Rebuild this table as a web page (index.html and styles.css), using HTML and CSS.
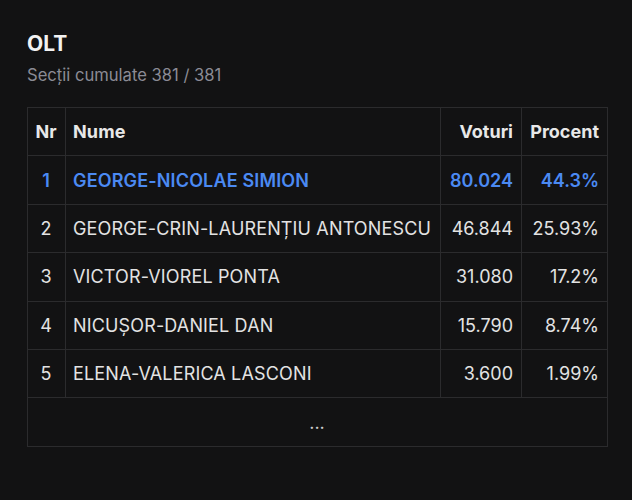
FILE: index.html
```html
<!DOCTYPE html>
<html lang="ro">
<head>
<meta charset="utf-8">
<link rel="stylesheet" href="styles.css">
</head>
<body>
<div class="panel">
  <h1 class="title">OLT</h1>
  <p class="subtitle">Secții cumulate 381 / 381</p>
  <table class="results">
    <colgroup><col class="c-nr"><col class="c-name"><col class="c-vot"><col class="c-pct"></colgroup>
    <thead>
      <tr><th class="nr">Nr</th><th class="name">Nume</th><th class="num">Voturi</th><th class="num">Procent</th></tr>
    </thead>
    <tbody>
      <tr class="lead"><td class="nr">1</td><td class="name">GEORGE-NICOLAE SIMION</td><td class="num">80.024</td><td class="num">44.3%</td></tr>
      <tr><td class="nr">2</td><td class="name">GEORGE-CRIN-LAURENȚIU ANTONESCU</td><td class="num">46.844</td><td class="num">25.93%</td></tr>
      <tr><td class="nr">3</td><td class="name">VICTOR-VIOREL PONTA</td><td class="num">31.080</td><td class="num">17.2%</td></tr>
      <tr><td class="nr">4</td><td class="name">NICUȘOR-DANIEL DAN</td><td class="num">15.790</td><td class="num">8.74%</td></tr>
      <tr><td class="nr">5</td><td class="name">ELENA-VALERICA LASCONI</td><td class="num">3.600</td><td class="num">1.99%</td></tr>
      <tr class="more"><td colspan="4">...</td></tr>
    </tbody>
  </table>
</div>
</body>
</html>
```
FILE: styles.css
```css
html, body {
  margin: 0;
  background: #121213;
}
body {
  font-family: Inter, "Noto Sans", sans-serif;
  color: #e3e3e3;
}
.panel {
  padding: 30px 24px 0 27px;
}
.title {
  margin: 0;
  font-size: 21px;
  font-weight: 700;
  line-height: 28px;
  color: #f2f2f2;
}
.subtitle {
  margin: 5px 0 0;
  font-size: 16.6px;
  line-height: 24px;
  color: #8b8b95;
}
.results {
  margin-top: 20px;
  width: 581px;
  table-layout: fixed;
  border-collapse: collapse;
  font-size: 18px;
}
.c-nr { width: 38px; }
.c-vot { width: 81px; }
.c-pct { width: 86px; }
.results th, .results td {
  border: 1px solid #2b2b2d;
  height: 47.4px;
  padding: 0 8px 0 7px;
  white-space: nowrap;
}
.results th {
  font-weight: 700;
  text-align: left;
  color: #e8e8e8;
}
.results .name { letter-spacing: 0.15px; }
.results .nr { text-align: center; }
.results .num { text-align: right; }
.results .lead td {
  color: #4b8af3;
  font-weight: 600;
}
.results .more td {
  text-align: center;
  color: #cfcfcf;
}
```
